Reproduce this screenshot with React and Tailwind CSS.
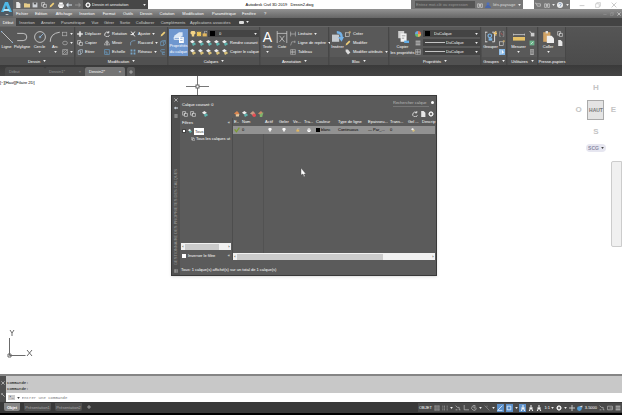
import React from "react";

// Small drawings, all on a 10x10 grid
const SHAPES = {
  line: <><path d="M1 1 9 9" stroke="#c4c4c4" fill="none" strokeWidth=".8" /><path d="M0 0h1v1H0zM9 9h1v1H9z" fill="#8fb6dd" /></>,
  polyline: <path d="M1 2H6Q9 2 9 5T6 8H1" stroke="#c4c4c4" fill="none" strokeWidth=".8" />,
  circle: <><circle cx="5" cy="5" r="4.5" stroke="#c4c4c4" fill="none" strokeWidth=".8" /><path d="M5 5 8 2M5 4v2M4 5h2" stroke="#8fb6dd" strokeWidth=".7" /></>,
  arc: <path d="M1 9Q1 2 9 1" stroke="#c4c4c4" fill="none" strokeWidth=".8" />,
  rect: <rect x="1" y="2" width="7" height="6" stroke="#bbb" fill="none" />,
  ellipse: <ellipse cx="5" cy="5" rx="4" ry="3" stroke="#bbb" fill="none" />,
  hatch: <path d="M1 1h8v8H1zM1 5 5 1M1 9 9 1M5 9 9 5" stroke="#bbb" fill="none" />,
  move: <path d="M5 0 7 2H6V4H8V3l2 2-2 2V6H6V8h1L5 10 3 8h1V6H2v1L0 5 2 3v1h2V2H3z" fill="#fff" />,
  copy: <path d="M1 1h5v3H4v3H1zM4 4h5v5H4z" stroke="#e2e2e2" fill="none" />,
  stretch: <path d="M2 3h4v6H2zM2 3 5 1h4v5L6 9" stroke="#bcd" fill="none" />,
  rotate: <path d="M8 3A4 4 0 1 0 9 7M8 0v3H5" stroke="#eee" fill="none" strokeWidth="1.3" />,
  mirror: <path d="M4 2v6H0zM6 2v6h4zM5 0v10" stroke="#ddd" fill="none" strokeWidth=".8" />,
  scale: <path d="M1 1h8v8H1zM1 5h4v4" stroke="#6da9d8" fill="none" />,
  trim: <path d="M2 1 8 9M8 1 5 5M1 6h4" stroke="#fff" fill="none" strokeWidth="1.5" />,
  fillet: <path d="M1 9V5Q1 1 9 1" stroke="#8abbe6" fill="none" />,
  array: <path d="M1 1h3v3H1zM6 1h3v3H6zM1 6h3v3H1zM6 6h3v3H6z" fill="#77a5c9" />,
  pencil: <path d="M1 9 2 6 7 1 9 3 4 8z" fill="#f0cf78" />,
  cube: <path d="M1 3 4 1h5v5L6 9H1zM1 3h5v6M6 3 9 1" stroke="#70a5cc" fill="none" />,
  offset: <path d="M8 1H3Q1 1 1 3T3 5h5M8 6H4v3h4" stroke="#6fa3cb" fill="none" />,
  bulb: <path d="M5 0a3 3 0 0 1 2 6v3H3V6a3 3 0 0 1 2-6" fill="#f3d487" />,
  sun: <path d="M5 0 6 2 9 1 8 4l2 1-2 1 1 3-3-1-1 2-1-2-3 1 1-3-2-1 2-1-1-3 3 1z" fill="#f0c95c" />,
  lock: <><path d="M4 5V2a2 2 0 0 1 4 0" stroke="#ddd" fill="none" /><rect x="1" y="4" width="7" height="5" fill="#e3b75e" /></>,
  layers: <><path d="M0 3 4 0l4 3-4 3z" fill="#eee" /><path d="M3 6 8 4l2 3-5 3z" fill="#5fb5b0" /></>,
  layersY: <><path d="M0 3 4 0l4 3-4 3z" fill="#eee" /><path d="M3 6 8 4l2 3-5 3z" fill="#d8c078" /></>,
  layersR: <><path d="M0 4 5 0l4 4-4 3z" fill="#c99a84" /><circle cx="7" cy="7" r="3" fill="#e64e55" /></>,
  layersO: <><path d="M0 4 5 0l4 4-4 3z" fill="#d9844e" /><path d="M3 6 9 5 8 9H3z" fill="#e6c9a0" /></>,
  layersG: <><path d="M0 4 5 0l4 4-4 3z" fill="#c98f68" /><path d="M3 6 9 2 7 10H3z" fill="#7fb56c" /></>,
  layersBig: <><path d="M1 4 5 1h3v3L5 6H1z" fill="#dbe7f5" /><path d="M1 5v2h4l3-2" stroke="#f4f8fc" fill="none" strokeWidth=".7" /><rect x="5" y="5" width="4" height="5" fill="#fff" /><path d="M6 6h2M6 8h2" stroke="#6e93c7" strokeWidth=".6" /></>,
  dim: <path d="M1 0v10M9 0v10M1 2h8M3 9l4-5M3 4l4 5" stroke="#d4d4d4" fill="none" strokeWidth=".6" />,
  linear: <path d="M1 1v8M9 1v8M1 5h8" stroke="#ddd" fill="none" strokeWidth=".8" />,
  leader: <path d="M1 9 3 3h6M8 1v4" stroke="#ccc" fill="none" strokeWidth=".8" />,
  table: <path d="M1 1h8v8H1zM1 4h8M1 6h8M4 1v8" stroke="#ccc" fill="none" strokeWidth=".8" />,
  insert: <><rect x="0" y="3" width="6" height="6" fill="#c4c9ce" /><path d="M4 0Q9 0 9 5h1L8 9 5 5h2Q7 2 4 2z" fill="#74b2e8" /></>,
  block: <><rect x="1" y="3" width="6" height="6" stroke="#ddd" fill="none" /><path d="M8 0v4M6 2h4" stroke="#e8bd69" /></>,
  tag: <path d="M1 1h4l4 5-4 3-4-5z" fill="#ddd" />,
  match: <><path d="M1 0h5v6H1z" fill="#cfcfcf" /><path d="M3 2h5v7H3z" fill="#f2f2f2" /><path d="M4 4h3M4 6h2" stroke="#888" strokeWidth=".6" /><path d="M6 8h4v2H6z" fill="#63aee8" /></>,
  wheel: <><path d="M5 5V0A5 5 0 0 1 10 5z" fill="#e67457" /><path d="M5 5h5A5 5 0 0 1 5 10z" fill="#ddba59" /><path d="M5 5v5A5 5 0 0 1 0 5z" fill="#69b873" /><path d="M5 5H0A5 5 0 0 1 5 0z" fill="#6ca7df" /></>,
  list: <path d="M1 2h8M1 5h8M1 8h8" stroke="#ddd" strokeWidth="1.4" />,
  group: <><path d="M2 1H0v8h2M6 1h2v8H6" stroke="#ddd" fill="none" strokeWidth=".8" /><circle cx="4" cy="4" r="1.5" stroke="#7db5e5" fill="none" /><rect x="3" y="6" width="3" height="2" fill="#7db5e5" /><path d="M9 0v4M7 2h3" stroke="#efc36a" /></>,
  ungroup: <><path d="M3 1H1v8h2M6 1h2v8H6" stroke="#aaa" fill="none" /><path d="M3 3 6 7" stroke="#d55" /></>,
  select: <><rect width="10" height="10" fill="#82b6e7" /><path d="M2 1v8M5 2v6l1-2h2z" stroke="#fff" fill="#fff" strokeWidth=".8" /></>,
  measure: <><path d="M0 3h10M0 2v2M10 2v2" stroke="#ddd" strokeWidth=".6" /><rect y="5" width="10" height="3" fill="#e5c066" /></>,
  qselect: <><rect x="3" y="3" width="6" height="6" fill="#ccc" /><path d="M1 0 4 4" stroke="#fff" /></>,
  green: <><rect x="1" y="1" width="8" height="8" fill="#6bb28a" /><path d="M3 7 7 3" stroke="#fff" /></>,
  calc: <><rect x="2" y="0" width="6" height="10" fill="#aaa" /><path d="M3 2h4M3 5h4M3 7h4" stroke="#555" /></>,
  paste: <><rect x="1" y="1" width="6" height="8" fill="#d1a365" /><rect x="3" y="0" width="2" height="2" fill="#ddd" /><path d="M4 4h4l2 2v4H4z" fill="#eee" /></>,
  sheet: <path d="M2 0h4l3 3v7H2z" fill="#e7e7e7" />,
  folder: <path d="M0 2h4l1 1h5v6H0z" fill="#e7cd89" />,
  disk: <><path d="M1 1h8v8H1z" fill="#cfd3d8" /><path d="M3 1h4v3H3z" fill="#555" /></>,
  print: <><path d="M0 4h10v4H0z" fill="#ddd" /><path d="M2 1h6v3H2zM2 7h6v3H2z" fill="#fff" /></>,
  undo: <path d="M0 5 4 1v3h6v2H4v3z" fill="#d7e2ec" />,
  redo: <path d="M10 5 6 1v3H0v2h6v3z" fill="#8e8e8e" />,
  gear: <><circle cx="5" cy="5" r="3" stroke="#eee" fill="none" strokeWidth="2" /><path d="M5 0v10M0 5h10M2 2l6 6M8 2 2 8" stroke="#eee" /><circle cx="5" cy="5" r="1.5" fill="#444" /></>,
  user: <><circle cx="5" cy="3" r="2.5" fill="#4f6fb8" /><path d="M0 10q1-5 5-5t5 5z" fill="#4a66a8" /></>,
  binoc: <path d="M1 9V3h3v6zM6 9V3h3v6zM3 5h4" stroke="#ddd" fill="#777" />,
  cart: <path d="M0 2h2l2 5h5V3H3" stroke="#ddd" fill="none" />,
  help: <><circle cx="5" cy="5" r="5" fill="#eee" /><path d="M3 4q0-2 2-2t2 2-2 2M5 7v1" stroke="#5577a5" fill="none" /></>,
  min: <path d="M1 6h8" stroke="#aaa" />,
  max: <path d="M1 3h6v6H1zM3 3V1h6v6H7" stroke="#aaa" fill="none" strokeWidth=".8" />,
  close: <path d="M1 1l8 8M9 1 1 9" stroke="#aaa" />,
  closeLight: <path d="M1 1l8 8M9 1 1 9" stroke="#ddd" strokeWidth="1.6" />,
  check: <path d="M1 4 4 8 9 1" stroke="#7a9c2e" fill="none" strokeWidth="2" />,
  whitebulb: <path d="M5 0a3 3 0 0 1 2 6v3H3V6a3 3 0 0 1 2-6" fill="#f8f8f8" />,
  plus: <path d="M5 0v10M0 5h10" stroke="#d8d8d8" strokeWidth="1.4" />,
  grid: <path d="M2 0v10M5 0v10M8 0v10M0 2h10M0 5h10M0 8h10" stroke="#aaa" strokeWidth=".8" />,
  dots: <path d="M1 2h1M4 2h1M8 2h1M1 5h1M4 5h1M8 5h1M1 8h1M4 8h1M8 8h1" stroke="#ddd" strokeWidth="1.5" />,
  snap: <path d="M1 1 4 4M4 4h3v4h2M1 8h3" stroke="#ccc" fill="none" />,
  ortho: <path d="M2 0v8h8" stroke="#ccc" fill="none" />,
  polar: <path d="M8 2A4 4 0 1 0 9 6M5 5h4M5 5V1" stroke="#ccc" fill="none" />,
  iso: <path d="M1 1l8 8M5 1v3" stroke="#999" fill="none" />,
  angle: <path d="M9 1 1 9h8" stroke="#e8f5ff" fill="none" strokeWidth="1.3" />,
  osnap: <path d="M2 2h6v6H2z" stroke="#e8f5ff" fill="none" strokeWidth="1.3" />,
  person: <path d="M5 0v4M5 4 2 10M5 4l3 6M2 5h6" stroke="#f4f4f4" fill="none" strokeWidth="1.7" />,
  screen: <path d="M1 2h8v6H1zM4 5h5" stroke="#ccc" fill="none" />,
  sphere: <><circle cx="4" cy="6" r="4" fill="#549bd4" /><path d="M4 3 9 1v3z" fill="#ddd" /></>,
  wrench: <path d="M1 1 4 4 9 9M1 4 4 1" stroke="#ddd" fill="none" strokeWidth="1.8" />,
};

const SIZES = {
  xs: "h-1 w-1",
  sm: "h-[6px] w-[6px]",
  lg: "h-3 w-3",
};

function Icon({ name, size = "sm" }) {
  return (
    <svg viewBox="0 0 10 10" className={`${SIZES[size]} shrink-0`} aria-hidden="true">
      {SHAPES[name]}
    </svg>
  );
}

function Caret({ dark }) {
  return (
    <svg viewBox="0 0 4 3" className="h-[2px] w-[3px] shrink-0" aria-hidden="true">
      <path d="M0 0h4L2 3z" fill={dark ? "#444" : "#eee"} />
    </svg>
  );
}

function IconButton({ name, size = "sm", className = "" }) {
  return (
    <button aria-label={name} className={`flex items-center justify-center ${className}`}>
      <Icon name={name} size={size} />
    </button>
  );
}

function BigTool({ icon, label, caret, className = "" }) {
  return (
    <button className={`flex h-[28px] shrink-0 flex-col items-center ${className}`}>
      <span className="flex h-[15px] items-center justify-center">
        {icon === "text" ? <span className="text-[14px] leading-[14px] text-white">A</span> : <Icon name={icon} size="lg" />}
      </span>
      {label.map((l) => (
        <span key={l} className="whitespace-nowrap leading-[6px]">{l}</span>
      ))}
      {caret && <span className="flex pt-px"><Caret /></span>}
    </button>
  );
}

function Tool({ icon, label, caret }) {
  return (
    <button className="flex h-[9px] items-center gap-[2px] whitespace-nowrap">
      <Icon name={icon} />
      <span>{label}</span>
      {caret && <Caret />}
    </button>
  );
}

function ToolColumn({ tools, className = "" }) {
  return (
    <div className={`flex shrink-0 flex-col ${className}`}>
      {tools.map(([icon, label, caret]) => (
        <Tool key={label} icon={icon} label={label} caret={caret} />
      ))}
    </div>
  );
}

function IconColumn({ icons, caret, className = "" }) {
  return (
    <div className={`flex shrink-0 flex-col ${className}`}>
      {icons.map((n) => (
        <button key={n} aria-label={n} className="flex h-[9px] items-center gap-[2px]">
          <Icon name={n} />
          {caret && <Caret />}
        </button>
      ))}
    </div>
  );
}

function Panel({ title, caret = true, className = "", children }) {
  return (
    <section className={`flex shrink-0 flex-col border-r border-[#474747] bg-[#595959] ${className}`}>
      <div className="flex h-[30px] pt-[2px]">{children}</div>
      <h2 className="flex h-2 items-center justify-center gap-[3px] whitespace-nowrap bg-[#515151]">
        {title} {caret && <Caret />}
      </h2>
    </section>
  );
}

function Combo({ label, value, className = "", swatch, line }) {
  return (
    <label className={`flex h-[7px] items-center bg-[#444] px-[2px] ${className}`}>
      {swatch && <span className="mr-1 h-[5px] w-[5px] bg-black" />}
      {line && <span className="mr-px h-px w-5 bg-[#c4c4c4]" />}
      <select aria-label={label} className="min-w-0 flex-1 appearance-none bg-transparent leading-[7px] text-[#eee] outline-none">
        <option>{value}</option>
      </select>
      <Caret />
    </label>
  );
}

function TitleBar() {
  return (
    <header className="flex h-[9px] items-center bg-white">
      <div className="flex h-full w-[70px] items-center justify-around bg-[#666] px-px">
        {["sheet", "folder", "disk", "copy", "pencil", "print", "undo", "redo"].map((n) => (
          <IconButton key={n} name={n} />
        ))}
      </div>
      <label className="flex h-full w-[65px] items-center gap-px bg-[#474747] px-[2px] text-[#eee]">
        <Icon name="gear" />
        <select aria-label="Espace de travail" className="min-w-0 flex-1 appearance-none bg-transparent outline-none">
          <option>Dessin et annotation</option>
        </select>
        <Caret />
      </label>
      <h1 className="flex-1 whitespace-pre text-center text-black">Autodesk Civil 3D 2019   Dessin2.dwg</h1>
      <div className="flex h-full w-[112px] items-center bg-[#777] pl-1">
        <input aria-label="Rechercher" placeholder="Entrez mot-clé ou expression" className="h-[7px] w-[60px] bg-[#555] px-px placeholder:text-[#999]" />
        <IconButton name="binoc" className="w-[10px]" />
        <IconButton name="user" />
        <button className="flex flex-1 items-center justify-between whitespace-nowrap px-[2px] text-[#ddd]">liés-paysage <Caret /></button>
      </div>
      <div className="ml-[11px] flex h-full w-[36px] items-center justify-around bg-[#777]">
        <IconButton name="cart" />
        <IconButton name="binoc" />
        <Caret />
        <IconButton name="help" />
        <Caret />
      </div>
      <div className="flex w-[52px] items-center justify-around pl-1">
        <IconButton name="min" />
        <IconButton name="max" />
        <IconButton name="close" />
      </div>
    </header>
  );
}

const MENUS = [
  ["Fichier", "w-[18px]"], ["Edition", "w-[20px]"], ["Affichage", "w-[26px]"], ["Insertion", "w-[20px]"], ["Format", "w-[24px]"],
  ["Outils", "w-[14px]"], ["Dessin", "w-[22px]"], ["Cotation", "w-[20px]"], ["Modification", "w-[32px]"], ["Paramétrique", "w-[30px]"],
  ["Fenêtre", "w-[20px]"], ["?", "w-[12px]"],
];

const RIBBON_TABS = [
  ["Début", "w-[16px]"], ["Insertion", "w-[22px]"], ["Annoter", "w-[20px]"], ["Paramétrique", "w-[30px]"], ["Vue", "w-[14px]"],
  ["Gérer", "w-[14px]"], ["Sortie", "w-[18px]"], ["Collaborer", "w-[22px]"], ["Compléments", "w-[34px]"], ["Applications associées", "w-[40px]"],
];

function MenuBar() {
  return (
    <nav className="flex h-[9px] items-center bg-linear-to-b from-[#929292] to-[#666] text-white">
      {MENUS.map(([m, w]) => (
        <button key={m} className={`${w} text-center whitespace-nowrap`}>{m}</button>
      ))}
      <div className="ml-auto flex gap-[3px] pr-px">
        <Icon name="min" size="xs" />
        <Icon name="max" size="xs" />
        <Icon name="closeLight" size="xs" />
      </div>
    </nav>
  );
}

function RibbonTabs() {
  return (
    <nav className="flex h-2 shrink-0 items-center bg-[#434343] text-[#ccc]">
      {RIBBON_TABS.map(([t, w], i) => (
        <button key={t} className={`${w} h-full whitespace-nowrap text-center ${i === 0 ? "bg-[#707070] text-white" : ""}`}>{t}</button>
      ))}
      <span className="ml-[9px] flex items-center gap-[2px]"><span className="h-[3px] w-[5px] rounded-[1px] bg-[#ddd]" /><Caret /></span>
    </nav>
  );
}

function Ribbon() {
  return (
    <div className="flex h-[39px] gap-px border-t border-[#666] bg-linear-to-b from-[#555] to-[#4b4b4b] text-white">
      <Panel title="Dessin" className="w-[75px]">
        <BigTool icon="line" label={["Ligne"]} className="w-[13px]" />
        <BigTool icon="polyline" label={["Polyligne"]} className="w-[18px]" />
        <BigTool icon="circle" label={["Cercle"]} caret className="w-[17px]" />
        <BigTool icon="arc" label={["Arc"]} caret className="w-[14px]" />
        <IconColumn icons={["rect", "ellipse", "hatch"]} caret />
      </Panel>
      <Panel title="Modification" className="w-[92px]">
        <ToolColumn className="w-[28px] pl-px" tools={[["move", "Déplacer"], ["copy", "Copier"], ["stretch", "Etirer"]]} />
        <ToolColumn className="w-[26px]" tools={[["rotate", "Rotation"], ["mirror", "Miroir"], ["scale", "Echelle"]]} />
        <ToolColumn className="w-[30px]" tools={[["trim", "Ajuster", true], ["fillet", "Raccord", true], ["array", "Réseau", true]]} />
        <IconColumn icons={["pencil", "cube", "offset"]} />
      </Panel>
      <Panel title="Calques" className="w-[91px]">
        <button className="flex h-[27px] w-[19px] shrink-0 flex-col items-center bg-[#6f97cf] pt-[2px] text-white">
          <Icon name="layersBig" size="lg" />
          <span className="leading-[6px]">Propriétés</span>
          <span className="whitespace-nowrap leading-[6px]">du calque</span>
        </button>
        <div className="flex flex-1 flex-col pl-[2px]">
          <div className="flex h-[9px] items-center">
            <Icon name="bulb" /><Icon name="sun" /><Icon name="lock" />
            <Combo label="Calque" value="0" swatch className="flex-1" />
          </div>
          {[["layers", "Rendre courant"], ["layersY", "Copier le calque"]].map(([n, label]) => (
            <div key={n} className="flex h-[9px] items-center gap-[2px]">
              {[0, 1, 2, 3].map((i) => <IconButton key={i} name={n} />)}
              <Tool icon={n} label={label} />
            </div>
          ))}
        </div>
      </Panel>
      <Panel title="Annotation" className="w-[68px]">
        <BigTool icon="text" label={["Texte"]} caret className="w-[13px]" />
        <BigTool icon="dim" label={["Cote"]} className="w-[16px]" />
        <ToolColumn tools={[["linear", "Linéaire", true], ["leader", "Ligne de repère", true], ["table", "Tableau"]]} />
      </Panel>
      <Panel title="Bloc" className="w-[59px]">
        <BigTool icon="insert" label={["Insérer"]} className="w-[15px]" />
        <ToolColumn tools={[["block", "Créer"], ["pencil", "Modifier"], ["tag", "Modifier attributs", true]]} />
      </Panel>
      <Panel title="Propriétés" className="w-[91px]">
        <BigTool icon="match" label={["Copier", "les propriétés"]} className="w-[25px]" />
        <IconColumn icons={["wheel", "list", "table"]} className="w-[8px]" />
        <div className="flex flex-1 flex-col gap-[2px] pt-px">
          <Combo label="Couleur" value="DuCalque" swatch />
          <Combo label="Epaisseur de ligne" value="DuCalque" line />
          <Combo label="Type de ligne" value="DuCalque" line />
        </div>
      </Panel>
      <Panel title="Groupes" className="w-[25px]">
        <BigTool icon="group" label={["Grouper"]} className="w-[17px]" />
        <IconColumn icons={["ungroup", "block", "select"]} />
      </Panel>
      <Panel title="Utilitaires" className="w-[30px]">
        <BigTool icon="measure" label={["Mesurer"]} caret className="w-[21px]" />
        <IconColumn icons={["qselect", "green", "calc"]} />
      </Panel>
      <Panel title="Presse-papiers" caret={false} className="w-[27px]">
        <BigTool icon="paste" label={["Coller"]} caret className="w-[18px]" />
        <IconColumn icons={["copy", "sheet"]} />
      </Panel>
    </div>
  );
}

function DocTabs() {
  return (
    <nav className="flex h-[11px] items-end bg-linear-to-b from-[#3a3a3a] to-[#454545] pl-[5px] text-[#999]">
      <button className="h-[9px] w-[40px] rounded-t-[2px] bg-[#4c4c4c] px-1 text-left">Début</button>
      <button className="flex h-[9px] w-[40px] items-center justify-between rounded-t-[2px] bg-[#4c4c4c] px-1">Dessin1* <span>×</span></button>
      <button className="flex h-[9px] w-[40px] items-center justify-between rounded-t-[2px] bg-[#747474] px-1 text-white">Dessin2* <span>×</span></button>
      <button aria-label="Nouveau" className="ml-[2px] flex h-[9px] w-2 items-center justify-center rounded-t-[2px] bg-[#5b5b5b]"><Icon name="plus" size="xs" /></button>
    </nav>
  );
}

const COLUMNS = [
  ["E..", "w-[8px]", <Icon name="check" />],
  ["Nom", "w-[23px]", "0"],
  ["Actif", "w-[14px]", <Icon name="whitebulb" size="xs" />],
  ["Geler", "w-[14px]", <Icon name="whitebulb" size="xs" />],
  ["Ve...", "w-[11px]", <Icon name="lock" size="xs" />],
  ["Tra...", "w-[12px]", <Icon name="print" size="xs" />],
  ["Couleur", "w-[22px]", <span className="flex items-center gap-px"><span className="h-1 w-1 bg-black" />blanc</span>],
  ["Type de ligne", "w-[30px]", "Continuous"],
  ["Epaisseu...", "w-[22px]", "— Par_..."],
  ["Trans...", "w-[18px]", "0"],
  ["Gel ...", "w-[14px]", <Icon name="layersY" size="xs" />],
  ["Descrip", "", ""],
];
const ICON_COLUMNS = ["Actif", "Geler", "Ve...", "Tra...", "Gel ..."];

function ScrollBar({ thumb, className = "" }) {
  return (
    <div className={`flex h-[7px] items-center bg-[#f1f1f1] text-[#222] ${className}`}>
      <button aria-label="Gauche" className="w-1 font-bold">‹</button>
      <div className="flex flex-1"><div className={`h-[6px] bg-[#cbcbcb] ${thumb}`} /></div>
      <button aria-label="Droite" className="w-1 font-bold">›</button>
    </div>
  );
}

function LayerPalette() {
  return (
    <aside className="absolute left-[171px] top-[19px] flex h-[181px] w-[266px] border border-[#393939] bg-[#5b5b5b] text-white shadow-sm">
      <div className="flex w-2 shrink-0 flex-col items-center gap-1 bg-[#505050] pt-[2px]">
        <Icon name="closeLight" size="xs" />
        <Icon name="undo" size="xs" />
        <Icon name="list" size="xs" />
        <span className="mt-auto [writing-mode:vertical-rl] rotate-180 whitespace-nowrap leading-[6px] text-[#999]">GESTIONNAIRE DES PROPRIETES DES CALQUES</span>
        <span className="mb-[2px]"><Icon name="table" size="xs" /></span>
      </div>
      <div className="flex min-w-0 flex-1 flex-col">
        <div className="flex h-[13px] items-center justify-between px-[2px]">
          <span className="pt-[3px]">Calque courant: 0</span>
          <label className="flex items-center gap-[2px]">
            <input aria-label="Rechercher calque" placeholder="Rechercher calque" className="w-[36px] border-b border-[#777] bg-transparent placeholder:text-[#bbb]" />
            <span className="h-[3px] w-[3px] rounded-full bg-white" />
          </label>
        </div>
        <div className="flex h-[9px] items-center px-[2px]">
          <div className="flex w-[52px] gap-[2px]">
            <IconButton name="copy" /><IconButton name="copy" /><span className="w-[2px]" /><IconButton name="layers" />
          </div>
          <div className="flex flex-1 gap-[2px]">
            <IconButton name="layersO" /><IconButton name="layers" /><IconButton name="layersR" /><IconButton name="layersG" />
          </div>
          <div className="flex gap-[2px]">
            <IconButton name="rotate" /><IconButton name="sheet" /><IconButton name="gear" />
          </div>
        </div>
        <div className="flex min-h-0 flex-1 pr-px">
          <div className="flex w-[53px] shrink-0 flex-col border-r border-[#4d4d4d] px-px">
            <div className="flex h-2 items-center justify-between px-px"><span>Filtres</span><span>«</span></div>
            <div className="mt-px flex h-2 items-center gap-[2px] px-px">
              <span className="h-1 w-1 border border-[#444] bg-white" />
              <Icon name="layers" size="xs" />
              <span className="bg-white px-px leading-[7px] text-[#333]">Tous</span>
            </div>
            <div className="flex h-[7px] items-center gap-px whitespace-nowrap pl-[10px]"><Icon name="copy" size="xs" />Tous les calques ut</div>
            <ScrollBar thumb="w-4/5" className="mt-auto" />
            <label className="mt-px flex h-[9px] items-center gap-[2px] px-px">
              <input type="checkbox" className="h-1 w-1 appearance-none bg-white" />
              Inverser le filtre <span className="ml-auto">«</span>
            </label>
          </div>
          <div className="flex min-w-0 flex-1 flex-col">
            <table className="w-full table-fixed border-collapse text-left leading-[8px]">
              <thead>
                <tr className="h-2">
                  {COLUMNS.map(([c, w]) => <th key={c} className={`${w} whitespace-nowrap p-0 pl-px font-normal`}>{c}</th>)}
                </tr>
              </thead>
              <tbody>
                <tr className="h-2 bg-[#929292] text-black">
                  {COLUMNS.map(([c, , v]) => (
                    <td key={c} className={`whitespace-nowrap p-0 ${ICON_COLUMNS.includes(c) ? "pl-1" : "pl-px"}`}>{v}</td>
                  ))}
                </tr>
              </tbody>
            </table>
            <div className="ml-[30px] flex-1 border-l border-[#525252]" />
            <ScrollBar thumb="w-3/4" />
          </div>
        </div>
        <p className="flex h-[15px] items-center pl-px pt-[3px]">Tous: 1 calque(s) affiché(s) sur un total de 1 calque(s)</p>
      </div>
    </aside>
  );
}

function Canvas() {
  return (
    <main className="relative min-h-0 flex-1 overflow-hidden bg-white">
      <p className="pt-[3px] text-black">[−][Haut][Filaire 2D]</p>
      <svg viewBox="0 0 24 20" className="absolute left-[186px] top-0 h-5 w-6" aria-hidden="true">
        <path d="M0 10.5h23M11.5 0v20" stroke="#777" />
        <rect x="10" y="9" width="3" height="3" fill="#fff" stroke="#666" />
      </svg>
      <svg viewBox="0 0 30 34" className="absolute bottom-3 left-[5px] h-[34px] w-[30px]" aria-hidden="true">
        <path d="M4.5 10v17.5h16M3 26h3v3H3zM5 2l2 3 2-3M7 5v3M22 22l5 6M27 22l-5 6" stroke="#6b6b6b" fill="none" />
      </svg>
      <div className="absolute right-0 top-2 grid w-[52px] grid-cols-3 items-center justify-items-center text-[8px] font-bold leading-2 text-[#c4c4c4]">
        <span className="col-start-2">H</span>
        <span className="col-start-1">O</span>
        <button className="my-2 h-[20px] w-[17px] border border-[#aaa] bg-[#e4e4e4] text-[5px] text-[#777]">HAUT</button>
        <span>E</span>
        <span className="col-start-2">S</span>
        <button className="col-start-2 mt-2 flex items-center gap-[2px] rounded-sm bg-[#e6e6f0] px-[2px] text-[5px] text-[#8c8ca5]">SCG <Caret dark /></button>
      </div>
      <div className="absolute right-0 top-[85px] h-[86px] w-[11px] rounded-l-[2px] border border-[#ccc] bg-[#f0f0f0]" />
      <LayerPalette />
      <svg viewBox="0 0 6 9" className="absolute left-[300px] top-[92px] h-[9px] w-[6px]" aria-hidden="true">
        <path d="M1 0v7l2-1 1 3 1-1-1-2h2z" fill="#fff" stroke="#444" strokeWidth=".4" />
      </svg>
    </main>
  );
}

function CommandLine() {
  return (
    <div className="flex h-[28px] border-t-2 border-[#858585] bg-[#c8c8c8]">
      <div className="flex w-[6px] flex-col items-center justify-between bg-[#505050] py-[5px]">
        <Icon name="closeLight" size="xs" />
        <Icon name="wrench" size="xs" />
      </div>
      <div className="flex flex-1 flex-col font-['Liberation_Mono',monospace] text-black">
        <div className="h-[17px] pl-px pt-1 leading-[6px]">Commande:<br />Commande:</div>
        <label className="flex h-[9px] items-center gap-[2px] bg-white pl-[2px]">
          <span className="bg-[#ccc] px-px leading-[5px]">›_</span>
          <Caret dark />
          <input aria-label="Commande" placeholder="Entrer une commande" className="h-[8px] flex-1 placeholder:text-[#777]" />
        </label>
      </div>
    </div>
  );
}

function StatusBar() {
  return (
    <footer className="flex h-[13px] items-start justify-between border-b-2 border-black bg-[#393939] pt-px text-white">
      <div className="flex h-2 items-stretch gap-1 pl-1">
        <button className="w-4 rounded-b-[2px] bg-[#858585] font-bold">Objet</button>
        <button className="w-[27px] rounded-b-[2px] bg-[#505050] text-[#aaa]">Présentation1</button>
        <button className="w-[27px] rounded-b-[2px] bg-[#505050] text-[#aaa]">Présentation2</button>
        <button aria-label="Ajouter" className="flex w-[5px] items-center justify-center"><Icon name="plus" size="xs" /></button>
      </div>
      <div className="flex h-[9px] w-[204px] items-center justify-between bg-[#4a4a4a] px-px">
        <button>OBJET</button>
        <IconButton name="grid" /><IconButton name="dots" /><Caret />
        <IconButton name="snap" /><IconButton name="ortho" /><IconButton name="polar" /><Caret />
        <IconButton name="iso" /><Caret />
        <IconButton name="angle" className="h-2 w-[7px] bg-[#5d91cb]" /><IconButton name="osnap" className="h-2 w-[7px] bg-[#5d91cb]" /><Caret />
        <IconButton name="person" className="h-2 w-[7px] bg-[#5d91cb]" /><IconButton name="person" /><IconButton name="person" />
        <button className="flex items-center gap-px">1:1<Caret /></button>
        <IconButton name="gear" /><Caret />
        <IconButton name="plus" /><IconButton name="sphere" />
        <button>3.5000</button>
        <IconButton name="snap" /><IconButton name="screen" /><IconButton name="list" />
      </div>
    </footer>
  );
}

export default function App() {
  return (
    <div className="flex h-screen w-full flex-col overflow-hidden font-['Liberation_Sans',sans-serif] text-[4px] leading-[7px]">
      <div className="flex h-[18px] bg-[#666]">
        <button aria-label="Menu de l'application" className="h-4 w-[13px] bg-[#505a62]">
          <svg viewBox="0 0 13 16" className="h-4 w-[13px]" aria-hidden="true">
            <path d="M1 12 5 2h3l4 10H9L6 5 4 12z" fill="#4eb8e8" />
            <path d="M4 9h5l1 2H3z" fill="#b5e4f6" />
            <path d="M5 14h4l-2 1z" fill="#ddd" />
          </svg>
        </button>
        <div className="min-w-0 flex-1">
          <TitleBar />
          <MenuBar />
        </div>
      </div>
      <RibbonTabs />
      <Ribbon />
      <DocTabs />
      <Canvas />
      <CommandLine />
      <StatusBar />
    </div>
  );
}
